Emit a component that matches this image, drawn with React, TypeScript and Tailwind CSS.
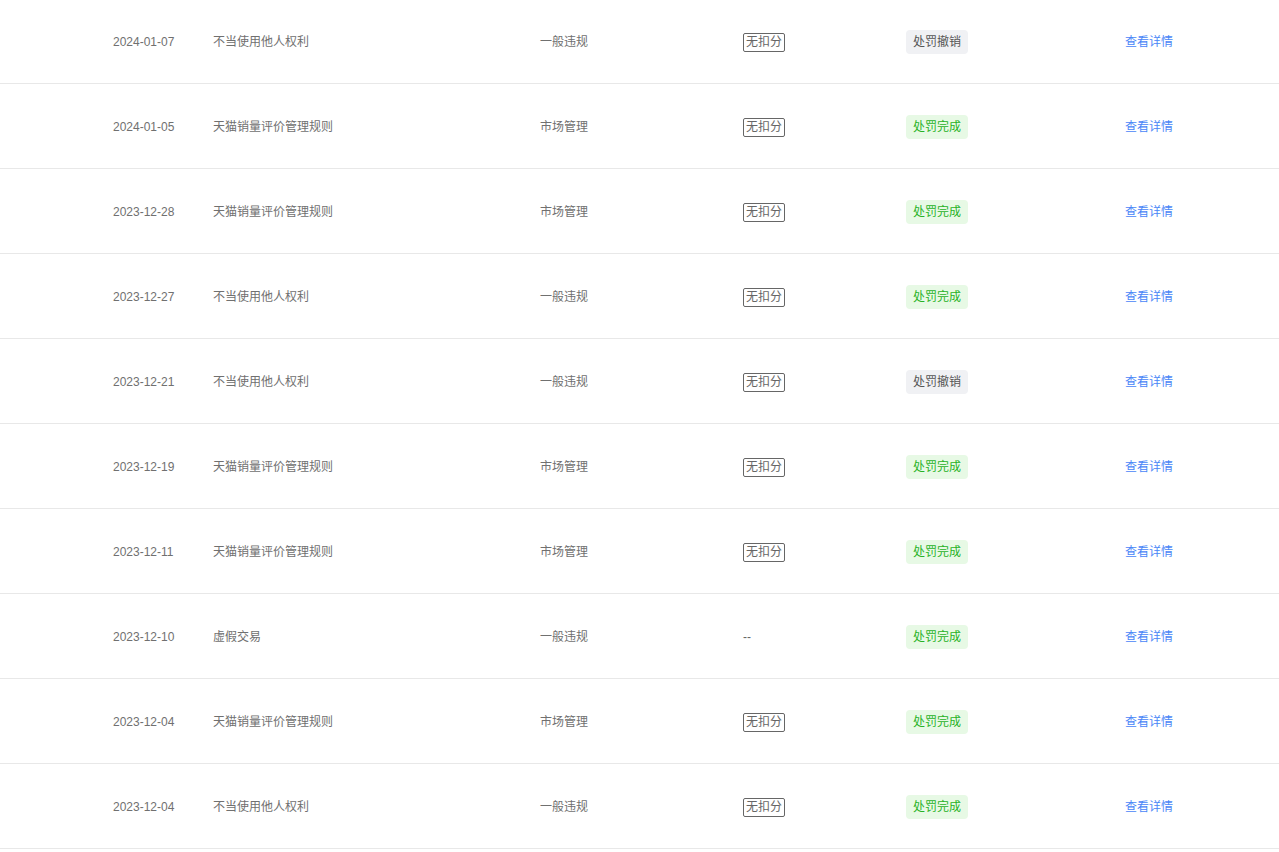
const rows = [
    { date: '2024-01-07', title: '不当使用他人权利', type: '一般违规', score: true, status: 'revoked' },
    { date: '2024-01-05', title: '天猫销量评价管理规则', type: '市场管理', score: true, status: 'done' },
    { date: '2023-12-28', title: '天猫销量评价管理规则', type: '市场管理', score: true, status: 'done' },
    { date: '2023-12-27', title: '不当使用他人权利', type: '一般违规', score: true, status: 'done' },
    { date: '2023-12-21', title: '不当使用他人权利', type: '一般违规', score: true, status: 'revoked' },
    { date: '2023-12-19', title: '天猫销量评价管理规则', type: '市场管理', score: true, status: 'done' },
    { date: '2023-12-11', title: '天猫销量评价管理规则', type: '市场管理', score: true, status: 'done' },
    { date: '2023-12-10', title: '虚假交易', type: '一般违规', score: false, status: 'done' },
    { date: '2023-12-04', title: '天猫销量评价管理规则', type: '市场管理', score: true, status: 'done' },
    { date: '2023-12-04', title: '不当使用他人权利', type: '一般违规', score: true, status: 'done' },
]

export default function App() {
    return (
        <main className="w-[1279px] h-[852px] bg-white overflow-hidden text-[12px] text-[#707070] font-['Liberation_Sans','Noto_Sans_CJK_SC',sans-serif]">
            {/* penalty records */}
            <div className="-mt-px">
                {rows.map((r, i) => (
                    <div key={i} className="h-[85px] pt-[2px] border-b border-[#e8e8e8] flex items-center pl-[113px]">
                        <div className="w-[100px]">{r.date}</div>
                        <div className="w-[327px]">{r.title}</div>
                        <div className="w-[203px]">{r.type}</div>
                        <div className="w-[163px]">
                            {r.score ? (
                                <span className="inline-block border border-[#666] rounded-[2px] px-[2px] leading-[17px] text-[#666]">无扣分</span>
                            ) : (
                                <span className="text-[#666]">--</span>
                            )}
                        </div>
                        <div className="w-[219px]">
                            {r.status === 'done' ? (
                                <span className="inline-block rounded-[4px] bg-[#e7f9e5] text-[#27b227] px-[7px] leading-[24px]">处罚完成</span>
                            ) : (
                                <span className="inline-block rounded-[4px] bg-[#f0f1f4] text-[#555] px-[7px] leading-[24px]">处罚撤销</span>
                            )}
                        </div>
                        <a className="text-[#4a86f7] cursor-pointer">查看详情</a>
                    </div>
                ))}
            </div>
        </main>
    )
}
